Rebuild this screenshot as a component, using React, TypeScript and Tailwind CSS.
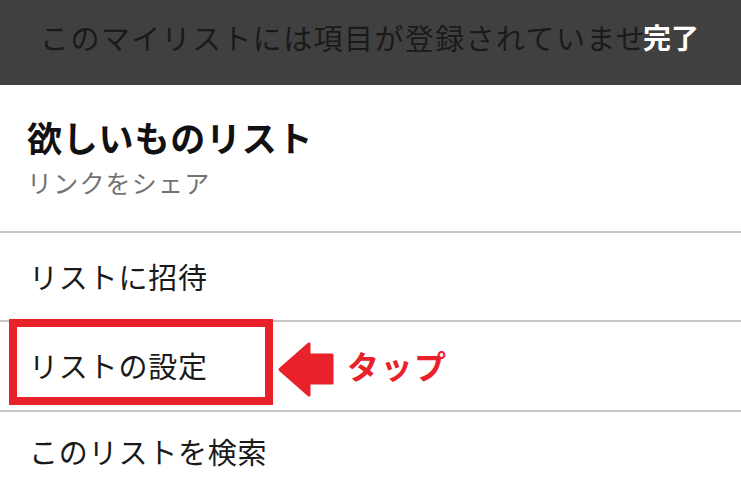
import React from "react";

const jp = { fontFamily: '"Noto Sans CJK JP", "Noto Sans", sans-serif' };

const Divider = () => <div className="h-[2px] w-full bg-[#c6c6c6]" />;

const App = () => {
  return (
    <div className="w-[741px] h-[493px] overflow-hidden bg-white" style={jp}>
      {/* ヘッダー */}
      <div className="flex h-[85px] items-center bg-[#404040] pl-[40px] pr-[42px] pb-[12px]">
        <div className="flex-1 overflow-hidden whitespace-nowrap text-[29px] leading-[36px] tracking-[1.4px] text-[#1a1a1a]">
          このマイリストには項目が登録されていません
        </div>
        <div className="text-[28px] leading-[36px] font-bold text-white">完了</div>
      </div>

      {/* リスト名 */}
      <div className="pl-[27px] pt-[32px] pb-[33px]">
        <div className="text-[35px] leading-[40px] tracking-[0.8px] font-bold text-[#111]">欲しいものリスト</div>
        <div className="mt-[9px] text-[25px] leading-[32px] tracking-[1.2px] text-[#727272]">リンクをシェア</div>
      </div>
      <Divider />

      <div className="flex h-[87px] items-center pl-[29px] text-[29px] tracking-[0.8px] text-[#1a1a1a]">リストに招待</div>
      <Divider />

      <div className="relative flex h-[88px] items-center pl-[29px] text-[29px] tracking-[0.8px] text-[#1a1a1a]">
        リストの設定
        {/* 注釈 */}
        <div className="absolute left-[9px] top-[-3px] h-[86px] w-[264px] border-[8px] border-[#e8212b]" />
        <svg className="absolute left-[277px] top-[19px]" width="58" height="57" viewBox="0 0 58 57">
          <path
            d="M3 28.5 L32 3 L32 14 L55 14 L55 42 L32 42 L32 54 Z"
            fill="#e8212b"
            stroke="#e8212b"
            strokeWidth="3"
            strokeLinejoin="round"
          />
        </svg>
        <div className="absolute left-[347px] top-[23px] text-[32px] leading-[40px] tracking-[1.5px] font-bold text-[#e8212b]">タップ</div>
      </div>
      <Divider />

      <div className="flex h-[80px] items-center pl-[29px] text-[29px] tracking-[0.8px] text-[#1a1a1a]">このリストを検索</div>
    </div>
  );
};

export default App;
